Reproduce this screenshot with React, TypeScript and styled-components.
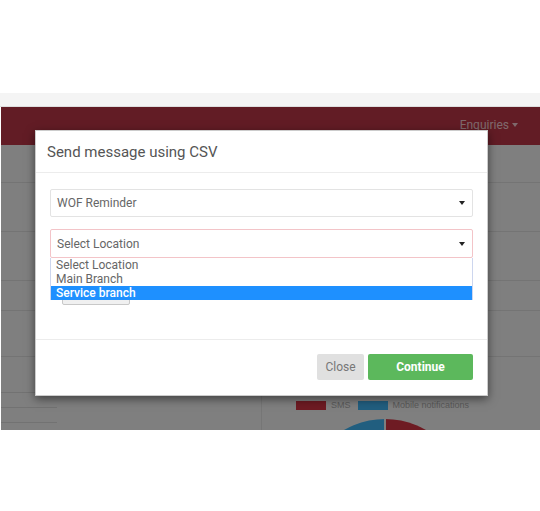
import React from "react";
import styled, { createGlobalStyle } from "styled-components";

const GlobalStyle = createGlobalStyle`
  html, body {
    margin: 0;
    padding: 0;
    background: #ffffff;
    font-family: Roboto, "Liberation Sans", sans-serif;
  }
  * { box-sizing: border-box; }
`;

const Frame = styled.div`
  width: 540px;
  height: 511px;
  overflow: hidden;
`;

const TopSpace = styled.div`
  height: 93px;
`;

const BrowserStrip = styled.div`
  height: 14px;
  background: #f4f4f4;
  border-bottom: 1px solid #dedede;
`;

const Page = styled.div`
  position: relative;
  height: 323px;
  margin-left: 1px;
  overflow: hidden;
  background: #ffffff;
`;

const Navbar = styled.div`
  height: 38px;
  background: #c4384a;
  display: flex;
  align-items: center;
  justify-content: flex-end;
  padding-right: 22px;
  padding-bottom: 2px;
`;

const NavLink = styled.span`
  color: #ffd3d8;
  font-size: 12px;
  display: flex;
  align-items: center;
  gap: 3px;
`;

const Caret = styled.span<{ $color?: string }>`
  display: inline-block;
  width: 0;
  height: 0;
  border-left: 3px solid transparent;
  border-right: 3px solid transparent;
  border-top: 4px solid ${(p) => p.$color || "currentColor"};
`;

const Row = styled.div<{ $h: number }>`
  height: ${(p) => p.$h}px;
  border-bottom: 1px solid #e8e8e8;
`;

const ChartSection = styled.div`
  display: flex;
  height: 100px;
`;

const LeftColumn = styled.div`
  width: 261px;
  padding-top: 35px;
  border-right: 1px solid #ececec;
`;

const ShortLine = styled.div`
  width: 56px;
  height: 15px;
  border-top: 1px solid #e4e4e4;
`;

const RightColumn = styled.div`
  flex: 1;
  display: flex;
  flex-direction: column;
  padding: 43px 0 0 34px;
`;

const Legend = styled.div`
  display: flex;
  align-items: center;
  font-family: "Liberation Sans", Arial, sans-serif;
  font-size: 9px;
  color: #b4b4b4;
  line-height: 10px;
  flex-shrink: 0;
`;

const Swatch = styled.span<{ $color: string }>`
  width: 30px;
  height: 9px;
  background: ${(p) => p.$color};
  margin-right: 5px;
`;

const LegendLabel = styled.span`
  margin-right: 7px;
`;

const Pie = styled.svg`
  display: block;
  flex-shrink: 0;
  margin: 9px 0 0 7px;
`;

const Backdrop = styled.div`
  position: absolute;
  inset: 0;
  background: rgba(0, 0, 0, 0.5);
`;

const Modal = styled.div`
  position: absolute;
  left: 34px;
  top: 23px;
  width: 453px;
  background: #ffffff;
  border: 1px solid rgba(0, 0, 0, 0.2);
  box-shadow: 0 3px 9px rgba(0, 0, 0, 0.5);
`;

const ModalHeader = styled.div`
  height: 42px;
  padding: 0 11px;
  display: flex;
  align-items: center;
  border-bottom: 1px solid #ececec;
  font-size: 15px;
  color: #555555;
`;

const ModalBody = styled.div`
  height: 166px;
  padding: 16px 14px 0;
  display: flex;
  flex-direction: column;
`;

const SelectWrap = styled.div`
  position: relative;
`;

const SelectBox = styled.div<{ $error?: boolean; $h: number }>`
  height: ${(p) => p.$h}px;
  border: 1px solid ${(p) => (p.$error ? "#f3c4c8" : "#e3e3e3")};
  border-radius: 2px;
  display: flex;
  align-items: center;
  justify-content: space-between;
  padding: 0 7px 0 6px;
  font-size: 12px;
  color: #666666;
`;

const OptionList = styled.div`
  position: absolute;
  left: 0;
  right: 0;
  top: 100%;
  height: 42px;
  background: #ffffff;
  border: 1px solid #cdd6ee;
  border-top: none;
  z-index: 2;
`;

const Option = styled.div<{ $active?: boolean }>`
  height: 14px;
  line-height: 14px;
  padding-left: 5px;
  font-size: 12px;
  color: ${(p) => (p.$active ? "#ffffff" : "#666666")};
  background: ${(p) => (p.$active ? "#1e90ff" : "transparent")};
  font-weight: ${(p) => (p.$active ? 500 : 400)};
`;

const Spacer = styled.div`
  height: 12px;
`;

const UploadButton = styled.div`
  margin: 16px 0 0 12px;
  width: 68px;
  height: 31px;
  background: #f0f0f0;
  border: 1px solid #c8c8c8;
  border-radius: 2px;
`;

const ModalFooter = styled.div`
  height: 56px;
  border-top: 1px solid #ececec;
  display: flex;
  justify-content: flex-end;
  align-items: flex-start;
  gap: 4px;
  padding: 14px 14px 0;
`;

const Button = styled.button<{ $primary?: boolean }>`
  height: 26px;
  width: ${(p) => (p.$primary ? "105px" : "47px")};
  border: none;
  border-radius: 2px;
  font-family: Roboto, "Liberation Sans", sans-serif;
  font-size: 12px;
  font-weight: ${(p) => (p.$primary ? 700 : 400)};
  color: ${(p) => (p.$primary ? "#ffffff" : "#777777")};
  background: ${(p) => (p.$primary ? "#5cb85c" : "#e0e0e0")};
  padding: 0;
`;

export default function App() {
  return (
    <>
      <GlobalStyle />
      <Frame>
        <TopSpace />
        <BrowserStrip />
        <Page>
          <Navbar>
            <NavLink>
              Enquiries
              <Caret />
            </NavLink>
          </Navbar>
          <Row $h={38} />
          <Row $h={49} />
          <Row $h={49} />
          <Row $h={30} />
          <Row $h={46} />
          <ChartSection>
            <LeftColumn>
              <ShortLine />
              <ShortLine />
              <ShortLine />
            </LeftColumn>
            <RightColumn>
              <Legend>
                <Swatch $color="#dc3646" />
                <LegendLabel>SMS</LegendLabel>
                <Swatch $color="#42bcff" />
                <LegendLabel>Mobile notifications</LegendLabel>
              </Legend>
              <Pie width="164" height="164" viewBox="0 0 164 164">
                <path d="M82 82 L82 0 A82 82 0 0 1 82 164 Z" fill="#dc3646" />
                <path d="M82 82 L82 164 A82 82 0 0 1 82 0 Z" fill="#42bcff" />
                <line x1="82" y1="0" x2="82" y2="164" stroke="#ffffff" strokeWidth="2" />
              </Pie>
            </RightColumn>
          </ChartSection>
          <Backdrop />
          <Modal>
            <ModalHeader>Send message using CSV</ModalHeader>
            <ModalBody>
              <SelectBox $h={28}>
                WOF Reminder
                <Caret $color="#222" />
              </SelectBox>
              <Spacer />
              <SelectWrap>
                <SelectBox $h={29} $error>
                  Select Location
                  <Caret $color="#222" />
                </SelectBox>
                <OptionList>
                  <Option>Select Location</Option>
                  <Option>Main Branch</Option>
                  <Option $active>Service branch</Option>
                </OptionList>
              </SelectWrap>
              <UploadButton />
            </ModalBody>
            <ModalFooter>
              <Button>Close</Button>
              <Button $primary>Continue</Button>
            </ModalFooter>
          </Modal>
        </Page>
      </Frame>
    </>
  );
}
